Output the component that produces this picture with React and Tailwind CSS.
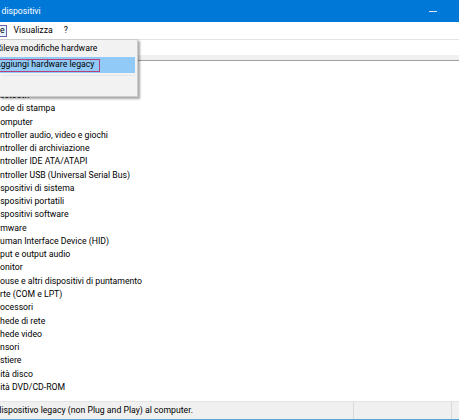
// Device Manager window, cropped on the left like the screenshot
const DEVICES = [
  { name: 'Bluetooth', cut: 'ml-[-8px]' },
  { name: 'Code di stampa', cut: 'ml-[-5.5px]' },
  { name: 'Computer', cut: 'ml-[-5.5px]' },
  { name: 'Controller audio, video e giochi', cut: 'ml-[-10.5px]' },
  { name: 'Controller di archiviazione', cut: 'ml-[-10.5px]' },
  { name: 'Controller IDE ATA/ATAPI', cut: 'ml-[-10.5px]' },
  { name: 'Controller USB (Universal Serial Bus)', cut: 'ml-[-10.5px]' },
  { name: 'Dispositivi di sistema', cut: 'ml-[-7.7px]' },
  { name: 'Dispositivi portatili', cut: 'ml-[-7.7px]' },
  { name: 'Dispositivi software', cut: 'ml-[-7.7px]' },
  { name: 'Firmware', cut: 'ml-[-9.7px]' },
  { name: 'Human Interface Device (HID)', cut: 'ml-[-6.1px]' },
  { name: 'Input e output audio', cut: 'ml-[-7.1px]' },
  { name: 'Monitor', cut: 'ml-[-7.5px]' },
  { name: 'Mouse e altri dispositivi di puntamento', cut: 'ml-[-7.5px]' },
  { name: 'Porte (COM e LPT)', cut: 'ml-[-10.3px]' },
  { name: 'Processori', cut: 'ml-[-8.3px]' },
  { name: 'Schede di rete', cut: 'ml-[-9.6px]' },
  { name: 'Schede video', cut: 'ml-[-9.6px]' },
  { name: 'Sensori', cut: 'ml-[-9.7px]' },
  { name: 'Tastiere', cut: 'ml-[-9.5px]' },
  { name: 'Unità disco', cut: 'ml-[-10.3px]' },
  { name: 'Unità DVD/CD-ROM', cut: 'ml-[-10.3px]' },
];

export default function App() {
  return (
    <div
      className="relative w-[459px] h-[420px] overflow-hidden bg-white text-[8.7px] text-black flex flex-col"
      style={{ fontFamily: 'Roboto, "Noto Sans", sans-serif' }}
    >
      {/* Title bar */}
      <div className="h-[22px] shrink-0 bg-[#0078d7] flex items-center justify-between">
        <span className="text-white ml-[-35px] leading-none whitespace-nowrap">Gestione dispositivi</span>
        <span className="w-[8px] h-px bg-[#d6eafa] mr-[22px]" />
      </div>

      {/* Menu bar */}
      <div className="h-[18px] shrink-0 flex items-center border-b border-[#e3e3e3] whitespace-nowrap">
        <span className="h-[12px] ml-[-28px] pl-[5px] pr-[1px] border border-[#6b5fa8] bg-[#e5f3ff] flex items-center leading-none">
          Azione
        </span>
        <span className="ml-[7px] leading-none">Visualizza</span>
        <span className="ml-[11px] leading-none">?</span>
      </div>

      {/* Toolbar */}
      <div className="h-[15px] shrink-0 bg-white" />
      <div className="h-[6px] shrink-0 bg-[#f0f0f0] border-b border-[#a0a0a0]" />

      {/* Tree */}
      <div className="flex-1 pt-[28px]">
        {DEVICES.map((d) => (
          <div key={d.name} className="h-[13.27px] leading-[13px] whitespace-nowrap">
            <span className={d.cut}>{d.name}</span>
          </div>
        ))}
      </div>

      {/* Status bar */}
      <div className="h-[18px] shrink-0 bg-[#f0f0f0] border-t border-[#e4e4e4] flex items-center">
        <span className="w-[353px] overflow-hidden whitespace-nowrap leading-none">
          <span className="ml-[-54px]">Aggiunge un dispositivo legacy (non Plug and Play) al computer.</span>
        </span>
        <span className="w-px h-full bg-[#d9d9d9]" />
        <span className="w-[97px]" />
        <span className="w-px h-full bg-[#d9d9d9]" />
        <span className="flex-1" />
      </div>
      <div className="h-px shrink-0 bg-[#5aa5d6]" />

      {/* Azione dropdown */}
      <div className="absolute left-[-1px] top-[39px] w-[139px] h-[58px] bg-[#f2f2f2] border border-[#cccccc] shadow-[2px_2px_2px_rgba(0,0,0,0.35)] pt-px whitespace-nowrap">
        <div className="h-[16px] flex items-center">
          <span className="ml-[-4.3px]">Rileva modifiche hardware</span>
        </div>
        <div className="h-[16px] mr-[2px] bg-[#91c9f7] flex items-center">
          <span className="h-[13px] w-[102px] ml-[-2px] border border-[#b8407a] flex items-center">
            <span className="ml-[-4px]">Aggiungi hardware legacy</span>
          </span>
        </div>
        <div className="mt-[2px] mx-[2px] h-px bg-[#e6e6e6]" />
      </div>
    </div>
  );
}
